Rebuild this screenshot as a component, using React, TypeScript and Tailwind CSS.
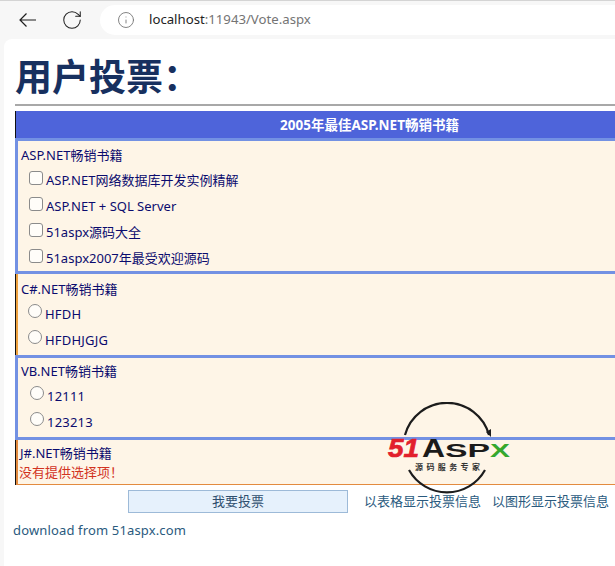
import { Info, RotateCw } from 'lucide-react';

const bodyFont = '[font-family:"Noto_Sans","Noto_Sans_CJK_SC",sans-serif]';

function Check({ label }: { label: string }) {
  return (
    <div className="flex h-[26px] items-center pl-[8px]">
      <input type="checkbox" className="mt-[-5px] h-[14px] w-[14px] appearance-none rounded-[3px] border border-[#8b8b8b] bg-[#fffdf9]" />
      <span className="ml-[3px]">{label}</span>
    </div>
  );
}

function Radio({ label, name }: { label: string; name: string }) {
  return (
    <div className="flex h-[26px] items-center pl-[8px]">
      <input type="radio" name={name} className="mt-[-6px] h-[14px] w-[14px] appearance-none rounded-full border border-[#8b8b8b] bg-[#fffdf9]" />
      <span className="ml-[3px] tracking-[0.2px]">{label}</span>
    </div>
  );
}

function Logo() {
  return (
    <svg className="absolute left-[385px] top-[402px]" width="130" height="92" viewBox="0 0 130 92">
      <path d="M20 33 A43.5 43.5 0 0 1 104 33" fill="none" stroke="#1c1c1c" strokeWidth="2.2" />
      <path d="M24 68 A43.5 43.5 0 0 0 100 68" fill="none" stroke="#1c1c1c" strokeWidth="2.2" />
      <path d="M101 30 L106 35 L106 27 Z" fill="#1c1c1c" />
      <text x="3" y="55" fontFamily="Liberation Sans" fontSize="26" fontWeight="700" fontStyle="italic" fill="#e2202c" stroke="#e2202c" strokeWidth="0.7" textLength="31" lengthAdjust="spacingAndGlyphs">51</text>
      <text x="37" y="55" fontFamily="Liberation Sans" fontSize="26" fontWeight="700" fill="#1b1b1b" textLength="23" lengthAdjust="spacingAndGlyphs">A</text>
      <text x="60" y="55" fontFamily="Liberation Sans" fontSize="19" fontWeight="700" fill="#1b1b1b" textLength="45" lengthAdjust="spacingAndGlyphs">SP</text>
      <text x="105" y="55" fontFamily="Liberation Sans" fontSize="19" fontWeight="700" fill="#35a82e" textLength="20" lengthAdjust="spacingAndGlyphs">X</text>
      <text x="30" y="68" fontFamily="Noto Sans CJK SC" fontSize="8" fontWeight="700" fill="#333333" textLength="65">源码服务专家</text>
    </svg>
  );
}

export default function App() {
  return (
    <div className={`relative h-[566px] w-[615px] overflow-hidden bg-[#f7f7f7] ${bodyFont}`}>
      {/* browser toolbar */}
      <div className="h-[39px] border-t border-[#d4d4d4] pt-[4px]">
        <div className="flex h-[30px] items-center">
          <svg className="ml-[19px] text-[#1f1f1f]" width="18" height="16" viewBox="0 0 18 16" fill="none" stroke="currentColor" strokeWidth="1.2">
            <path d="M1 8 H17 M7.5 1.5 L1 8 L7.5 14.5" />
          </svg>
          <RotateCw className="ml-[24px] text-[#1f1f1f]" size={22} strokeWidth={1.1} />
          <div className="ml-[17px] flex h-[30px] flex-1 items-center rounded-l-full bg-white pl-[17px]">
            <Info className="text-[#777777]" size={18} strokeWidth={1.2} />
            <span className="ml-[14px] text-[13.2px] text-[#222222]">
              localhost<span className="text-[#747474]">:11943/Vote.aspx</span>
            </span>
          </div>
        </div>
      </div>

      {/* page */}
      <div className="ml-[4px] h-[527px] rounded-tl-[8px] bg-white pl-[11px] pt-[12px]">
        <h1 className="h-[53px] text-[37px] font-bold leading-[48px] text-[#17305f] [font-family:'Noto_Sans_CJK_SC',sans-serif]">用户投票：</h1>
        <hr className="h-[2px] w-[600px] border-0 bg-[#a8a8a8]" />

        <div className="mt-[5px] w-[708px] border-l border-[#111111] text-[13px] leading-[18px] text-[#0b0b6e]">
          <div className="flex h-[27px] items-center justify-center bg-[#4e64da] text-[13.5px] font-bold text-white">2005年最佳ASP.NET畅销书籍</div>

          <div className="-ml-px h-[136px] border-[3px] border-[#7391e3] bg-[#fef5e7] pl-[3px] pt-[4px]">
            <div className="h-[18px] leading-[20px]">ASP.NET畅销书籍</div>
            <div className="pt-[4px]">
              <Check label="ASP.NET网络数据库开发实例精解" />
              <Check label="ASP.NET + SQL Server" />
              <Check label="51aspx源码大全" />
              <Check label="51aspx2007年最受欢迎源码" />
            </div>
          </div>

          <div className="h-[81px] border-l-2 border-[#eea23f] bg-[#fef5e7] pl-[3px] pt-[6px]">
            <div className="h-[18px]">C#.NET畅销书籍</div>
            <div className="-ml-[1px] pt-[3px]">
              <Radio name="csharp" label="HFDH" />
              <Radio name="csharp" label="HFDHJGJG" />
            </div>
          </div>

          <div className="-ml-px h-[85px] border-[3px] border-[#7391e3] bg-[#fef5e7] pl-[4px] pt-[4px]">
            <div className="-ml-px h-[18px]">VB.NET畅销书籍</div>
            <div className="pt-[3px]">
              <Radio name="vb" label="12111" />
              <Radio name="vb" label="123213" />
            </div>
          </div>

          <div className="h-[45px] border-b border-l-2 border-[#e38b3f] bg-[#fef5e7] pl-[2px] pt-[4px]">
            <div className="h-[19px]">J#.NET畅销书籍</div>
            <div className="-ml-[1px] text-[#d2331f]">没有提供选择项！</div>
          </div>
        </div>

        <div className="mt-[5px] flex items-center text-[13px] text-[#2a5a7e]">
          <button className="ml-[113px] h-[23px] w-[220px] border border-[#9dbad8] bg-[#e6f1fc] text-[13px] text-[#2f4f6f]">我要投票</button>
          <a className="ml-[16px] whitespace-nowrap">以表格显示投票信息</a>
          <a className="ml-[11px] whitespace-nowrap">以图形显示投票信息</a>
        </div>
        <div className="-ml-[2px] mt-[8px] text-[13px] tracking-[0.15px] text-[#2a5a7e]">download from 51aspx.com</div>
      </div>

      <Logo />
    </div>
  );
}
